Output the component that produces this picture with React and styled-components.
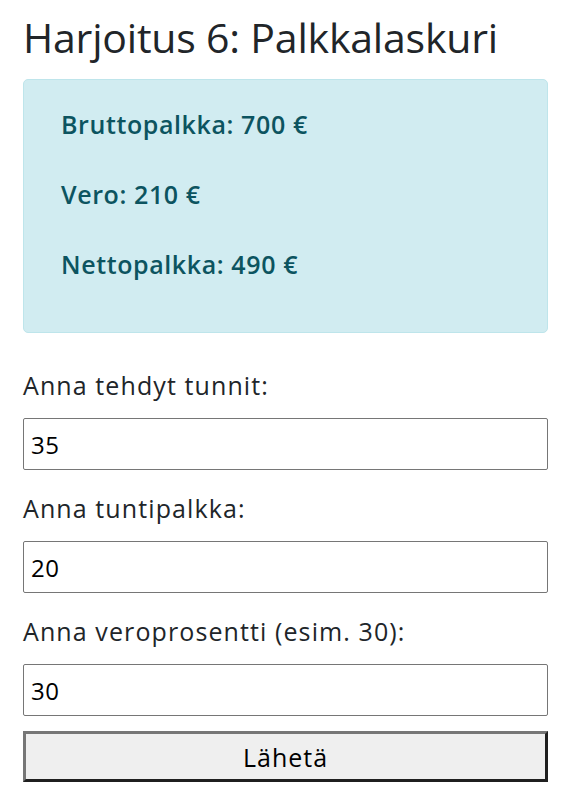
import React, { useState } from "react";
import styled, { createGlobalStyle } from "styled-components";

const GlobalStyle = createGlobalStyle`
  html, body {
    margin: 0;
    padding: 0;
    background: #fff;
  }
  body {
    font-family: "Open Sans", "Noto Sans", sans-serif;
    color: #212529;
  }
`;

const Page = styled.main`
  width: 525px;
  padding: 13px 0 0 23px;
  display: flex;
  flex-direction: column;
`;

const Title = styled.h1`
  margin: 0 0 18px;
  font-size: 41px;
  font-weight: 500;
  line-height: 48px;
  letter-spacing: -0.2px;
  color: #212529;
`;

const Alert = styled.div`
  background: #d1ecf1;
  border: 1px solid #bee5eb;
  border-radius: 5px;
  color: #0c5460;
  padding: 26px 37px 16px;
  margin-bottom: 34px;
`;

const ResultRow = styled.p`
  margin: 0 0 34px;
  font-size: 25px;
  font-weight: 600;
  line-height: 36px;
  letter-spacing: 0.6px;
`;

const Form = styled.form`
  display: flex;
  flex-direction: column;
`;

const Label = styled.label`
  font-size: 25px;
  line-height: 36px;
  letter-spacing: 1.1px;
  margin-top: ${(p) => (p.$first ? "0" : "20px")};
  margin-bottom: 15px;
`;

const Input = styled.input`
  box-sizing: border-box;
  width: 100%;
  height: 52px;
  margin: 0;
  padding: 0 7px;
  border: 1px solid #767676;
  border-radius: 2px;
  font-family: inherit;
  font-size: 24px;
  letter-spacing: 0.5px;
  color: #000;
  background: #fff;
`;

const Submit = styled.button`
  box-sizing: border-box;
  width: 100%;
  height: 51px;
  margin-top: 15px;
  border: 3px solid;
  border-color: #767676 #1f1f1f #1f1f1f #767676;
  background: #efefef;
  font-family: inherit;
  font-size: 25px;
  letter-spacing: 1px;
  color: #000;
  cursor: pointer;
`;

export default function App() {
  const [hours, setHours] = useState("35");
  const [rate, setRate] = useState("20");
  const [tax, setTax] = useState("30");

  const gross = 35 * 20;
  const taxAmount = (gross * 30) / 100;
  const net = gross - taxAmount;

  return (
    <>
      <GlobalStyle />
      <Page>
        <Title>Harjoitus 6: Palkkalaskuri</Title>
        <Alert>
          <ResultRow>Bruttopalkka: {gross} €</ResultRow>
          <ResultRow>Vero: {taxAmount} €</ResultRow>
          <ResultRow>Nettopalkka: {net} €</ResultRow>
        </Alert>
        <Form onSubmit={(e) => e.preventDefault()}>
          <Label $first htmlFor="hours">Anna tehdyt tunnit:</Label>
          <Input id="hours" type="text" value={hours} onChange={(e) => setHours(e.target.value)} />
          <Label htmlFor="rate">Anna tuntipalkka:</Label>
          <Input id="rate" type="text" value={rate} onChange={(e) => setRate(e.target.value)} />
          <Label htmlFor="tax">Anna veroprosentti (esim. 30):</Label>
          <Input id="tax" type="text" value={tax} onChange={(e) => setTax(e.target.value)} />
          <Submit type="submit">Lähetä</Submit>
        </Form>
      </Page>
    </>
  );
}
